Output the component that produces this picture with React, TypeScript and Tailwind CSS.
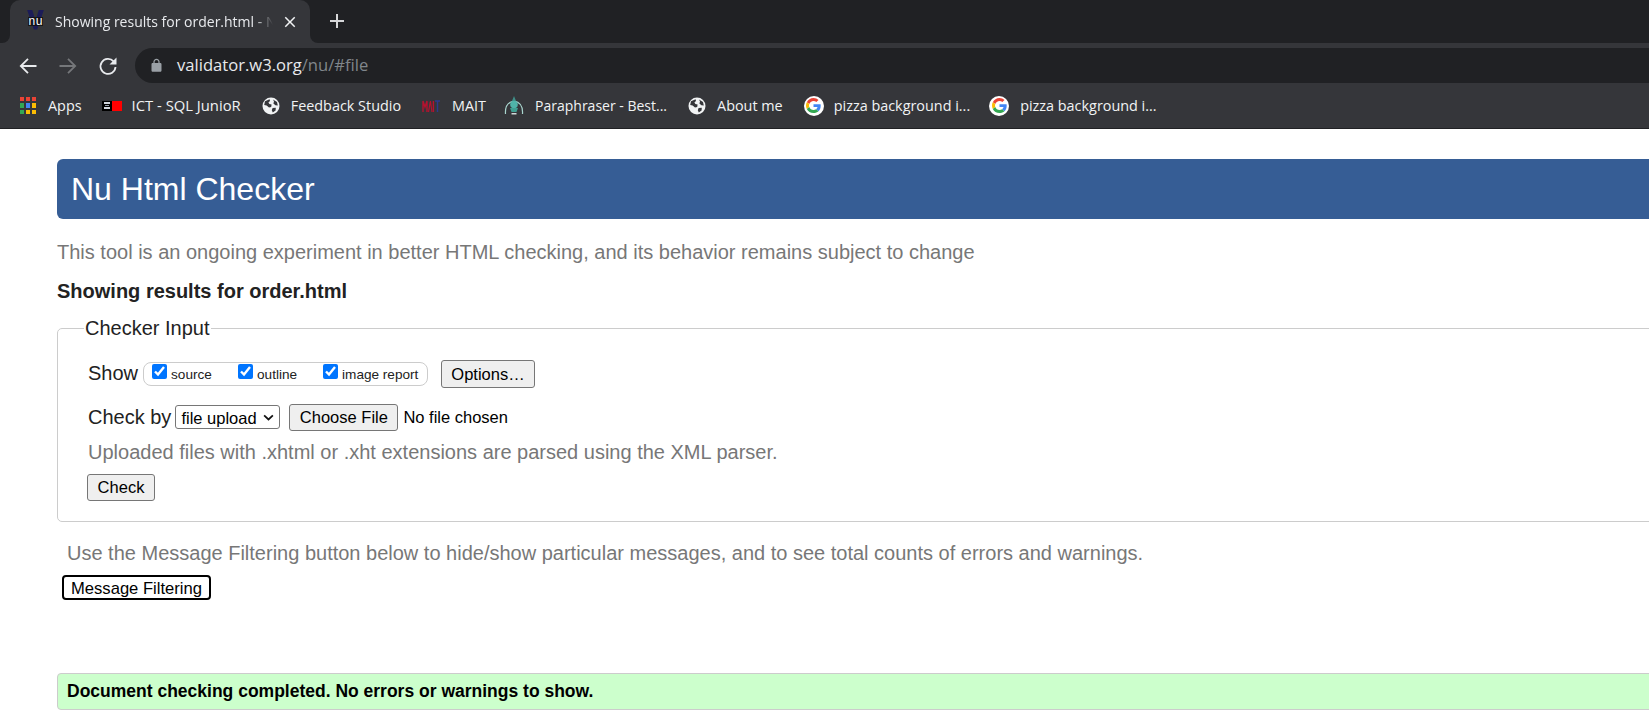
const LOCK =
  "M18 8h-1V6c0-2.76-2.24-5-5-5S7 3.24 7 6v2H6c-1.1 0-2 .9-2 2v10c0 1.1.9 2 2 2h12c1.1 0 2-.9 2-2V10c0-1.1-.9-2-2-2zm-9-2c0-1.66 1.34-3 3-3s3 1.34 3 3v2H9V6z";

function Arrow({ color, flip }: { color: string; flip?: boolean }) {
  return (
    <svg viewBox="0 0 24 24" className={`h-[24px] w-[24px] ${flip ? "rotate-180" : ""}`} fill="none" stroke={color} strokeWidth="1.8">
      <path d="M20.500 12H5M12 4.800 4.800 12l7.200 7.200" />
    </svg>
  );
}

function Reload() {
  return (
    <svg viewBox="0 0 24 24" className="h-[24px] w-[24px]">
      <path d="M17.600 7.400A7.500 7.500 0 1 0 19.500 13" fill="none" stroke="#e8eaed" strokeWidth="1.800" />
      <path d="M20.500 3.500v7h-7z" fill="#e8eaed" />
    </svg>
  );
}

function Globe() {
  return (
    <svg viewBox="0 0 18 18" className="block h-[18px] w-[18px] shrink-0">
      <circle cx="9" cy="9" r="8.500" fill="#f1f3f4" />
      <path
        d="M3 4.200 7.600 2.300 8 4 6.400 5.400 7.400 7 9.600 7.600 9.200 10 7 10.400 4.600 8.400 2.200 8ZM11 2.600 15 5 15.800 8.400 13.400 8.200 11.400 6.600 12 4.600ZM10.600 11 13.800 10.800 13.600 13.400 10.800 15.600 9.800 13.200Z"
        fill="#35363a"
      />
    </svg>
  );
}

function GoogleG() {
  return (
    <span className="flex h-[20px] w-[20px] shrink-0 items-center justify-center rounded-full bg-white">
      <svg viewBox="0 0 48 48" className="h-[15px] w-[15px]">
        <path fill="#EA4335" d="M24 9.500c3.500 0 6.700 1.200 9.200 3.600l6.900-6.900C35.900 2.400 30.400 0 24 0 14.600 0 6.500 5.400 2.600 13.200l8 6.200C12.500 13.700 17.800 9.500 24 9.500z" />
        <path fill="#4285F4" d="M47 24.500c0-1.600-.1-3.100-.4-4.500H24v9h12.900c-.6 3-2.200 5.500-4.800 7.200l7.700 6c4.500-4.200 7.200-10.300 7.200-17.700z" />
        <path fill="#FBBC05" d="M10.500 28.600c-.5-1.400-.8-3-.8-4.600s.3-3.200.8-4.600l-8-6.200C.9 16.400 0 20.100 0 24s.9 7.600 2.600 10.800l7.900-6.200z" />
        <path fill="#34A853" d="M24 48c6.500 0 11.900-2.100 15.900-5.800l-7.700-6c-2.100 1.400-4.900 2.300-8.200 2.300-6.200 0-11.500-4.200-13.400-9.900l-8 6.200C6.500 42.600 14.600 48 24 48z" />
      </svg>
    </span>
  );
}

function AppsGrid() {
  const colors = ["#ea4335", "#ea4335", "#ea4335", "#34a853", "#4285f4", "#fbbc04", "#34a853", "#fbbc04", "#fbbc04"];
  return (
    <span className="grid h-[17px] w-[16px] shrink-0 grid-cols-3 gap-[2px]">
      {colors.map((c, i) => (
        <span key={i} style={{ backgroundColor: c }} />
      ))}
    </span>
  );
}

function IctIcon() {
  return (
    <span className="flex h-[10px] w-[20px] shrink-0">
      <span className="flex w-[10px] flex-col items-center justify-center gap-[1px] bg-black">
        <span className="h-[2px] w-[6px] bg-gray-300" />
        <span className="h-[1px] w-[4px] bg-gray-400" />
        <span className="h-[2px] w-[6px] bg-gray-300" />
      </span>
      <span className="w-[10px] bg-[#ff0000]" />
    </span>
  );
}

function MaitIcon() {
  return (
    <svg viewBox="0 0 18 14" className="block h-[14px] w-[18px] shrink-0">
      <path d="M1 13V2l2 6 2-6v11" fill="none" stroke="#b5122f" strokeWidth="1.400" />
      <path d="M6.500 13 8.400 2 10 13" fill="none" stroke="#b5122f" strokeWidth="1.200" />
      <path d="M11.400 2v11" stroke="#b5122f" strokeWidth="1.400" />
      <path d="M13 2h5M15.500 2v11" stroke="#2b3a8f" strokeWidth="1.400" fill="none" />
    </svg>
  );
}

function ParaIcon() {
  return (
    <svg viewBox="0 0 20 20" className="block h-[20px] w-[20px] shrink-0">
      <path d="M1.500 18C1 11 4 6 10 5c6 1 9 6 8.500 13" fill="none" stroke="#a9d6cf" strokeWidth="1.200" />
      <path d="M10 0 12 5H8Z" fill="#3f8f88" />
      <circle cx="10" cy="8.500" r="3.800" fill="#4fb3a8" />
      <path d="M6 12h8l-1.500 4h-5Z" fill="#3f9f92" />
      <path d="M7.500 17h5v1.500h-5Z" fill="#cfd8d8" />
    </svg>
  );
}

function BookmarkBar() {
  return (
    <div className="flex h-[46px] items-center border-b border-[#202124] bg-[#35363a] pl-[20px] font-['Open_Sans',sans-serif] text-[14.400px] text-[#f1f3f4]">
      <AppsGrid />
      <span className="ml-[12px]">Apps</span>
      <span className="ml-[20px]"><IctIcon /></span>
      <span className="ml-[10px] text-[14.800px]">ICT - SQL JunioR</span>
      <span className="ml-[21px]"><Globe /></span>
      <span className="ml-[11px]">Feedback Studio</span>
      <span className="ml-[21px]"><MaitIcon /></span>
      <span className="ml-[12px]">MAIT</span>
      <span className="ml-[18px]"><ParaIcon /></span>
      <span className="ml-[11px] text-[14px]">Paraphraser - Best...</span>
      <span className="ml-[21px]"><Globe /></span>
      <span className="ml-[11px]">About me</span>
      <span className="ml-[21px]"><GoogleG /></span>
      <span className="ml-[10px]">pizza background i...</span>
      <span className="ml-[19px]"><GoogleG /></span>
      <span className="ml-[11px]">pizza background i...</span>
    </div>
  );
}

function BrowserChrome() {
  return (
    <div className="shrink-0">
      <div className="flex h-[43px] items-end bg-[#202124] pl-[10px]">
        <div className="relative flex h-[43px] w-[300px] items-center rounded-t-[10px] bg-[#35363a] pl-[17px] font-['Open_Sans',sans-serif] text-[14px] text-[#e8eaed]">
          <span className="absolute -left-[8px] bottom-0 h-[8px] w-[8px] bg-[#35363a]">
            <span className="block h-full w-full rounded-br-[8px] bg-[#202124]" />
          </span>
          <span className="absolute -right-[8px] bottom-0 h-[8px] w-[8px] bg-[#35363a]">
            <span className="block h-full w-full rounded-bl-[8px] bg-[#202124]" />
          </span>
          <span className="relative flex h-[18px] w-[17px] shrink-0 items-center justify-center font-['Liberation_Mono',monospace] text-[12px] leading-none text-white">
            <span className="absolute -top-[3px] h-[20px] w-[17px] bg-[#1c1c58]" style={{ clipPath: "polygon(0 0,30% 0,50% 55%,70% 0,100% 0,60% 100%,40% 100%)" }} />
            <span className="relative flex h-[9px] items-center bg-[#111]/80">nu</span>
          </span>
          <span className="ml-[11px] w-[218px] overflow-hidden whitespace-nowrap [mask-image:linear-gradient(to_right,black_92%,transparent)]">Showing results for order.html - Nu Html Checker</span>
          <svg viewBox="0 0 24 24" className="ml-[8px] h-[18px] w-[18px] shrink-0" fill="#f1f3f4">
            <path d="M19 6.410 17.590 5 12 10.590 6.410 5 5 6.410 10.590 12 5 17.590 6.410 19 12 13.410 17.590 19 19 17.590 13.410 12z" />
          </svg>
        </div>
        <svg viewBox="0 0 24 24" className="mb-[10px] ml-[15px] h-[24px] w-[24px]" fill="#d6d7d9">
          <path d="M19 13h-6v6h-2v-6H5v-2h6V5h2v6h6v2z" />
        </svg>
      </div>
      <div className="flex h-[40px] bg-[#35363a] pl-[16px]">
        <div className="mt-[5px] flex h-[35px] items-center gap-[16px]">
          <Arrow color="#e8eaed" />
          <Arrow color="#75777a" flip />
          <Reload />
        </div>
        <div className="ml-[15px] mt-[5px] flex h-[35px] flex-1 items-center rounded-l-[18px] bg-[#202124] pl-[14px] font-['Open_Sans',sans-serif] text-[16.600px]">
          <svg viewBox="0 0 24 24" className="h-[15px] w-[15px]" fill="#9aa0a6"><path d={LOCK} /></svg>
          <span className="ml-[13px] text-[#e8eaed]">validator.w3.org</span>
          <span className="text-[#80868b]">/nu/#file</span>
        </div>
      </div>
      <BookmarkBar />
    </div>
  );
}

function Check({ label, className }: { label: string; className: string }) {
  return (
    <label className={`flex items-start ${className}`}>
      <input type="checkbox" defaultChecked className="mt-[1px] h-[15px] w-[15px] accent-[#0075ff]" />
      <span className="ml-[4px] mt-[4px] text-[13.600px] leading-[16px]">{label}</span>
    </label>
  );
}

const btn = "rounded-[3px] border border-[#767676] bg-[#efefef] text-[16.500px] text-black";

export default function App() {
  return (
    <div className="flex h-screen w-full flex-col overflow-hidden bg-white font-['Liberation_Sans',Arial,sans-serif] text-[#222]">
      <BrowserChrome />
      <main className="-mr-[20px] pl-[57px] pt-[30px]">
        <h1 className="flex h-[60px] items-center rounded-l-[6px] bg-[#365d95] pl-[14px] text-[32px] text-white">Nu Html Checker</h1>
        <p className="mt-[20px] text-[20px] leading-[26px] text-[#777]">
          This tool is an ongoing experiment in better HTML checking, and its behavior remains subject to change
        </p>
        <p className="mt-[13px] text-[20px] font-bold leading-[26px]">Showing results for order.html</p>

        <fieldset className="mt-[13px] h-[205px] rounded-[5px] border border-[#ccc] pl-[26px]">
          <legend className="px-[1px] text-[20px] leading-[22px]">Checker Input</legend>
          <div className="mt-[20px] flex h-[30px] items-center">
            <span className="ml-[4px] -mt-[2px] text-[20px]">Show</span>
            <div className="ml-[5px] flex h-[24px] w-[285px] items-start rounded-[8px] border border-[#ccc] pl-[8px]">
              <Check label="source" className="w-[86px]" />
              <Check label="outline" className="w-[85px]" />
              <Check label="image report" className="" />
            </div>
            <button className={`${btn} ml-[13px] h-[28px] w-[94px]`}>Options…</button>
          </div>
          <div className="mt-[14px] flex h-[28px] items-center">
            <span className="ml-[4px] text-[20px]">Check by</span>
            <span className="relative ml-[4px] flex">
              <select className="h-[24px] w-[105px] appearance-none rounded-[3px] border border-[#767676] bg-white pl-[5px] text-[16.500px] text-black">
                <option>file upload</option>
              </select>
              <svg viewBox="0 0 12 8" className="absolute right-[6px] top-[9px] h-[7px] w-[11px]" fill="none" stroke="#111" strokeWidth="2">
                <path d="M1 1.500 6 6.200 11 1.500" />
              </svg>
            </span>
            <button className={`${btn} ml-[9px] h-[27px] w-[109px]`}>Choose File</button>
            <span className="ml-[5px] text-[16.500px] text-black">No file chosen</span>
          </div>
          <p className="ml-[4px] mt-[8px] text-[20px] leading-[26px] text-[#777]">
            Uploaded files with .xhtml or .xht extensions are parsed using the XML parser.
          </p>
          <button className={`${btn} ml-[3px] mt-[9px] block h-[27px] w-[68px]`}>Check</button>
        </fieldset>

        <p className="ml-[10px] mt-[18px] text-[20px] leading-[26px] text-[#777]">
          Use the Message Filtering button below to hide/show particular messages, and to see total counts of errors and warnings.
        </p>
        <button className="ml-[5px] mt-[9px] block h-[25px] w-[149px] rounded-[4px] border-2 border-black bg-white text-[16.600px] text-black">
          Message Filtering
        </button>
        <div className="mt-[73px] flex h-[37px] items-center rounded-l-[4px] border border-[#ccc] bg-[#ccffcc] pl-[9px] text-[17.500px] font-bold text-black">
          Document checking completed. No errors or warnings to show.
        </div>
      </main>
    </div>
  );
}
